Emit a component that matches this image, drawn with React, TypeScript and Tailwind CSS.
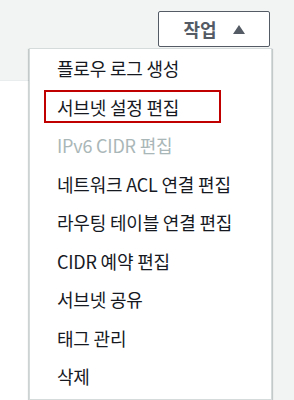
import React from 'react';

type MenuItem = {
    label: string;
    disabled?: boolean;
    highlighted?: boolean;
};

const items: MenuItem[] = [
    { label: '플로우 로그 생성' },
    { label: '서브넷 설정 편집', highlighted: true },
    { label: 'IPv6 CIDR 편집', disabled: true },
    { label: '네트워크 ACL 연결 편집' },
    { label: '라우팅 테이블 연결 편집' },
    { label: 'CIDR 예약 편집' },
    { label: '서브넷 공유' },
    { label: '태그 관리' },
    { label: '삭제' },
];

export default function App() {
    return (
        <div
            className="relative w-[294px] h-[400px] overflow-hidden bg-[#f2f3f3] text-[#16191f]"
            style={{ fontFamily: '"Noto Sans CJK KR", "Noto Sans", sans-serif' }}
        >
            {/* header with actions button */}
            <div className="h-[80px] flex justify-end items-start pt-[11px] pr-[24px]">
                <button className="w-[112px] h-[36px] flex items-center justify-center gap-[16px] border border-[#545b64] rounded-[2px] bg-white text-[#545b64] text-[18px] font-bold leading-none">
                    <span>작업</span>
                    <svg width="12" height="9" viewBox="0 0 12 9">
                        <path d="M6 0 L12 9 L0 9 Z" fill="#545b64" />
                    </svg>
                </button>
            </div>

            {/* content panel under the dropdown */}
            <div className="w-[260px] h-[320px] bg-white border-t border-[#eaeded]" />

            {/* dropdown menu */}
            <ul className="absolute left-[29px] top-[48px] w-[243px] bg-white border border-[#d5dbdb] pb-[3px] shadow-[0_1px_1px_0_rgba(0,28,36,0.3),1px_1px_1px_0_rgba(0,28,36,0.15),-1px_1px_1px_0_rgba(0,28,36,0.15)]">
                {items.map((item) => (
                    <li
                        key={item.label}
                        className={`h-[38.5px] flex items-center pl-[27px] text-[18px] tracking-[-0.2px] leading-none ${item.disabled ? 'text-[#aab7b8]' : 'text-[#16191f]'}`}
                    >
                        {item.highlighted ? (
                            <span className="-ml-[13px] w-[177px] h-[33px] flex items-center pl-[11px] border-2 border-[#c00000]">
                                {item.label}
                            </span>
                        ) : (
                            item.label
                        )}
                    </li>
                ))}
            </ul>
        </div>
    );
}
